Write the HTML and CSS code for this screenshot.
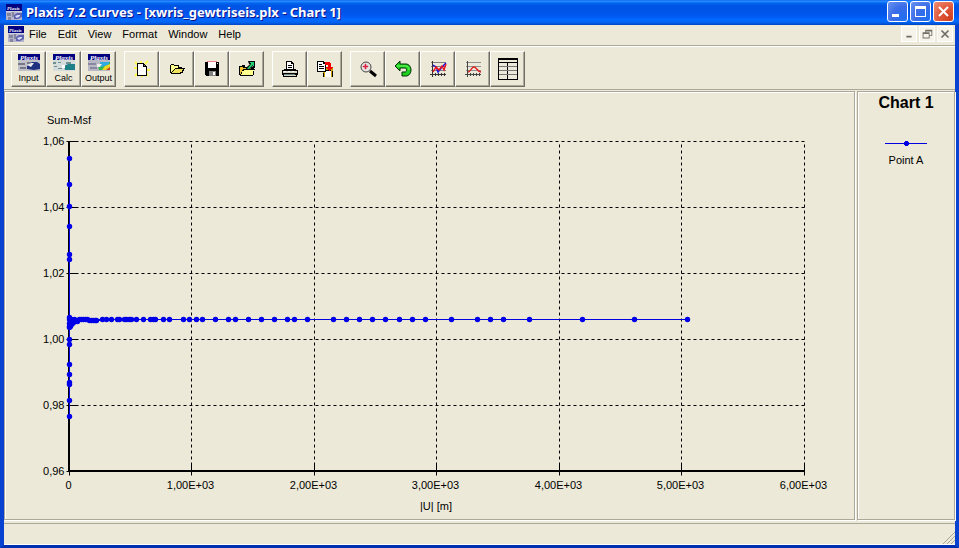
FILE: index.html
```html
<!DOCTYPE html>
<html lang="en">

<head>
  <meta charset="UTF-8">
  <meta name="viewport" content="width=device-width, initial-scale=1.0">
  <title>Plaxis 7.2 Curves</title>
  <link rel="stylesheet" href="styles.css">
</head>

<body>
  <svg class="defs" width="0" height="0" aria-hidden="true">
    <symbol id="appIcon" viewBox="0 0 16 16" overflow="visible">
      <rect width="16" height="16" fill="#b4b4cc" />
      <rect width="16" height="7" fill="#000080" />
      <text x="1" y="6" class="logo-text" font-size="5">Plaxis</text>
      <path d="M0 7h16v1H0z" fill="#d0d0e0" />
      <path d="M1 9h4v3H1zM6 8h2v5H6zM2 13h3v3H2z" fill="#85859f" />
      <path d="M8 11l3-2h5v4l-4 2H8z" fill="#6064b0" />
      <path d="M9 12l3-1h2v1l-3 2z" fill="#dcdcff" />
    </symbol>
  </svg>

  <div class="window">
    <header class="title-bar">
      <svg class="app-icon"><use href="#appIcon" /></svg>
      <h1>Plaxis 7.2 Curves - [xwris_gewtriseis.plx - Chart 1]</h1>
      <div class="window-buttons">
        <button aria-label="Minimize"><svg viewBox="0 0 19 19"><path d="M4 12h7v3H4z" fill="#fff" /></svg></button>
        <button aria-label="Maximize"><svg viewBox="0 0 19 19"><path d="M4 4h11v11H4zM5 7v7h9V7z" fill="#fff" fill-rule="evenodd" /></svg></button>
        <button class="close" aria-label="Close"><svg viewBox="0 0 19 19"><path d="M5 5l9 9M14 5l-9 9" stroke="#fff" stroke-width="2" /></svg></button>
      </div>
    </header>

    <nav class="menu-bar">
      <svg class="app-icon"><use href="#appIcon" /></svg>
      <button>File</button>
      <button>Edit</button>
      <button>View</button>
      <button>Format</button>
      <button>Window</button>
      <button>Help</button>
      <div class="mdi-buttons">
        <button aria-label="Minimize chart"><svg viewBox="0 0 16 16"><path d="M5 10h6v2H5z" /></svg></button>
        <button aria-label="Restore chart"><svg viewBox="0 0 16 16"><path d="M6 3h8v7h-3V9h2V5H7v1H6zM3 6h8v7H3zM4 8v4h6V8z" fill-rule="evenodd" /></svg></button>
        <button aria-label="Close chart"><svg viewBox="0 0 16 16"><path d="M4 4l8 8M12 4l-8 8" stroke="#716f64" stroke-width="2" /></svg></button>
      </div>
    </nav>

    <div class="toolbar">
      <div class="tool-group">
        <button class="labelled">
          <svg viewBox="0 0 22 17">
            <rect width="22" height="17" fill="#c0c0c8" />
            <rect width="22" height="6" fill="#000080" />
            <text x="2" y="6" class="logo-text" font-size="7">Plaxis</text>
            <path d="M0 9h7v2H0zM2 13h6v2H2zM9 8h4v2H9z" fill="#77778c" />
            <path d="M9 12l5-4h5l3 2v5l-6 1-7-1z" fill="#203080" />
            <path d="M9 11l4-2h3l-3 4z" fill="#e8e8e8" />
          </svg>
          <span>Input</span>
        </button>
        <button class="labelled">
          <svg viewBox="0 0 22 17">
            <rect width="22" height="17" fill="#d4dcdc" />
            <rect width="22" height="6" fill="#000080" />
            <text x="2" y="6" class="logo-text" font-size="7">Plaxis</text>
            <path d="M0 8h3v2H0zM5 8h3v1H5zM1 12h3v1H1zM5 14h4v1H5zM13 8h5v2h-5z" fill="#709090" />
            <path d="M11 12l4-2h7v6H12z" fill="#208088" />
            <path d="M9 11h3v3H9z" fill="#fff" />
          </svg>
          <span>Calc</span>
        </button>
        <button class="labelled">
          <svg viewBox="0 0 22 17">
            <rect width="22" height="17" fill="#b8b8c4" />
            <rect width="22" height="6" fill="#000080" />
            <text x="2" y="6" class="logo-text" font-size="7">Plaxis</text>
            <path d="M0 9h8v2H0zM2 13h7v2H2z" fill="#8888a0" />
            <path d="M10 12l4-4h8v8H11z" fill="#30b850" />
            <path d="M12 8h9v3l-8 2z" fill="#30a8e0" />
            <path d="M14 16l3-4 5-2v3l-4 3z" fill="#f0d820" />
            <path d="M18 16l4-3v3z" fill="#e03820" />
            <path d="M9 10h5l-2 3H9z" fill="#eee" />
          </svg>
          <span>Output</span>
        </button>
      </div>

      <div class="tool-group">
        <button aria-label="New">
          <svg viewBox="0 0 18 18">
            <path d="M2 2l3 3M8 1v3M15 1l-3 3M1 8h3M14 10h3M2 16l3-3M15 16l-2-3M9 15v2" stroke="#ffff50" stroke-width="2" />
            <path d="M4 3h7v1h1v1h1v1h1v10H4z" />
            <path d="M5 4h5v3h3v8H5zM11 5v1h1z" fill="#fff" />
          </svg>
        </button>
        <button aria-label="Open">
          <svg viewBox="0 0 18 18">
            <path d="M3 4h3v1h5v2h3v1h3v1h-1v2h-1v2h-2v1H3v-1H2V5h1z" />
            <path d="M3 5h3v1h4v2H7v1H6v1H5v1H4v1H3z" fill="#ffff90" />
            <path d="M7 9h8v1h-1v2h-2v1H4v-1h1v-1h1v-1h1z" fill="#f0e060" />
          </svg>
        </button>
        <button aria-label="Save">
          <svg viewBox="0 0 18 18">
            <path d="M2 2h14v14H3v-1H2z" />
            <path d="M4 1h10v1H4z" fill="#f08090" />
            <path d="M5 2h8v6H5z" fill="#fff" />
            <path d="M6 11h7v5H6z" fill="#808080" />
            <path d="M10 12h2v3h-2z" fill="#fff" />
            <path d="M14 3h1v1h-1z" fill="#ddd" />
          </svg>
        </button>
        <button aria-label="Export">
          <svg viewBox="0 0 18 18">
            <path d="M1 6h3V5h3v2h9v2h1v1h-1v5h-1v1H2v-1H1z" />
            <path d="M2 7h3v1h8v1H5v1H4v2H3v2H2z" fill="#f0c030" />
            <path d="M6 10h10v1h-1v4H3v-1h1v-3h2z" fill="#ffff90" />
            <path d="M10 1h7v7h-1V7h-1V6l-4 4H9l-1-1V8l4-4h-1z" />
            <path d="M12 2h4v4h-1V5l-4 4H9l4-5V3h-1z" fill="#20d070" />
          </svg>
        </button>
      </div>

      <div class="tool-group">
        <button aria-label="Print">
          <svg viewBox="0 0 18 18">
            <path d="M5 1h6v1h1v1h1v6h2v1h2v5h-1v2H2v-2H1v-5h2V9h2z" />
            <path d="M6 2h4v2h2v5H6z" fill="#fff" />
            <path d="M7 5h4v1H7zM7 7h4v1H7z" />
            <path d="M2 11h14v2H2zM3 15h12v1H3z" fill="#d8d8c8" />
            <path d="M3 11h2v1H3zM7 11h2v1H7zM11 11h2v1h-2z" fill="#fff" />
            <path d="M3 14h11v1H3z" fill="#608080" />
          </svg>
        </button>
        <button aria-label="Copy">
          <svg viewBox="0 0 18 18">
            <path d="M7 8h10v9H7z" fill="#c8a000" />
            <path d="M9 10h6v7H9z" fill="#fff" />
            <path d="M9 10h6v1H9zM16 11h1v6h-1zM7 13h1v4H7z" />
            <path d="M1 1h7v1h1v1h1v9H1z" />
            <path d="M2 2h5v2h2v7H2z" fill="#fff" />
            <path d="M3 4h3v1H3zM3 6h5v1H3zM3 8h5v1H3z" />
            <path d="M9 2h5v1h1v4h2v1h-1v1h-1v1h-1v1h-1v-1h-1V9h-1V8h-1V7h2V5H9z" fill="#f00000" />
          </svg>
        </button>
      </div>

      <div class="tool-group">
        <button aria-label="Zoom in">
          <svg viewBox="0 0 18 18">
            <circle cx="7" cy="7" r="5" fill="#e4e4e0" stroke="#444" />
            <path d="M11 11l6 5" stroke="#000" stroke-width="3" />
            <path d="M6 4h1v2h2v1H7v2H6V7H4V6h2z" fill="#e02040" stroke="#e02040" stroke-width=".5" />
          </svg>
        </button>
        <button aria-label="Undo">
          <svg viewBox="0 0 18 18">
            <path d="M1 6l5-5v3h6c3 0 5 3 5 6s-2 6-5 6H8v-4h3c2 0 2-4 0-4H6v3z" fill="#20d020" stroke="#003000" />
            <path d="M3 6h9c2 0 3 2 3 4" fill="none" stroke="#70ff60" />
          </svg>
        </button>
        <button aria-label="Curve settings">
          <svg viewBox="0 0 18 18">
            <g shape-rendering="crispEdges">
              <path d="M2 2h15v1H2zM2 6h15v1H2zM2 10h15v1H2z" fill="#808080" />
              <path d="M3 1h1v16H3zM1 14h16v1H1zM6 13h1v3H6zM9 13h1v3H9zM12 13h1v3h-1zM15 13h1v3h-1z" fill="#333" />
            </g>
            <path d="M4 5l3 2 2 5 4-5 4-4" fill="none" stroke="#1010e0" stroke-width="1.4" />
            <path d="M4 12l3-5 3 3 3-4 2 4 2-6" fill="none" stroke="#f01020" stroke-width="1.4" />
          </svg>
        </button>
        <button aria-label="Chart settings">
          <svg viewBox="0 0 18 18">
            <g shape-rendering="crispEdges">
              <path d="M2 2h15v1H2zM2 6h15v1H2zM2 10h15v1H2z" fill="#909090" />
              <path d="M3 1h1v16H3zM1 14h16v1H1zM6 13h1v3H6zM9 13h1v3H9zM12 13h1v3h-1zM15 13h1v3h-1z" fill="#444" />
            </g>
            <path d="M4 12c3 0 3-5 6-5s3 5 7 5" fill="none" stroke="#e02020" stroke-width="1.4" />
          </svg>
        </button>
        <button aria-label="Table">
          <svg class="table-icon" viewBox="0 0 20 22">
            <path d="M0 0h20v22H0z" />
            <path d="M1 2h18v2H1zM1 5h8v16H1zM10 5h9v16h-9z" fill="#ece9d8" />
            <path d="M1 8h18v1H1zM1 12h18v1H1zM1 16h18v1H1z" fill="#777" />
          </svg>
        </button>
      </div>
    </div>

    <main class="workspace">
      <section class="chart-panel">
        <svg id="chart" viewBox="0 0 849 427" role="img" aria-label="Sum-Msf against displacement">
          <text x="42" y="32">Sum-Msf</text>
          <g id="grid"></g>
          <g id="curve"></g>
          <text x="431" y="418" text-anchor="middle">|U| [m]</text>
        </svg>
      </section>
      <aside class="legend">
        <h2>Chart 1</h2>
        <svg class="legend-line" viewBox="0 0 42 5">
          <path d="M0 2h42v1H0z" />
          <path d="M20 0h3v1h1v3h-1v1h-3V4h-1V1h1z" />
        </svg>
        <p>Point A</p>
      </aside>
    </main>

    <footer class="status-bar">
      <svg viewBox="0 0 13 13">
        <path d="M1 13L13 1M5 13l8-8M9 13l4-4" stroke="#aca899" />
      </svg>
    </footer>
  </div>

  <script src="chart.js"></script>
</body>

</html>
```
FILE: styles.css
```css
* {
  box-sizing: border-box;
}

body {
  margin: 0;
  font-family: Tahoma, "Liberation Sans", Arial, sans-serif;
  font-size: 11px;
  color: #000;
  background-color: #ece9d8;
}

button {
  margin: 0;
  padding: 0;
  border: none;
  background: none;
  color: inherit;
  font: inherit;
}

svg {
  display: block;
}

.defs {
  position: absolute;
}

.window {
  display: flex;
  flex-direction: column;
  height: 100vh;
  border: solid #0842d0;
  border-width: 0 4px 3px;
  border-color: #0842d0 #0842d0 #0030b0;
}

.app-icon {
  width: 16px;
  height: 16px;
  flex: none;
  overflow: visible;
}

.logo-text {
  font-family: "Liberation Serif", serif;
  font-style: italic;
  font-weight: bold;
  fill: #fff;
}

/* title bar */
.title-bar {
  display: flex;
  align-items: center;
  gap: 4px;
  flex: none;
  height: 25px;
  margin: 0 -4px;
  padding: 0 5px 2px 6px;
  background: linear-gradient(#0058ee 0%, #3593ff 4%, #127dff 8%, #0262ee 14%, #0054e3 24%, #0055eb 56%, #005bf5 66%, #026afe 80%, #0062ef 90%, #0046c0 100%);
}

.title-bar h1 {
  flex: 1;
  margin: 0;
  color: #fff;
  font-family: "Trebuchet MS", "Noto Sans", sans-serif;
  font-size: 13px;
  line-height: 20px;
  text-shadow: 1px 1px #0f1089;
  white-space: nowrap;
}

.window-buttons {
  display: flex;
  gap: 2px;
}

.window-buttons button {
  width: 21px;
  height: 21px;
  border: 1px solid #fff;
  border-radius: 3px;
  background: radial-gradient(circle at 85% 85%, #2070f0, #3a6ce8 50%, #6c94f0 100%);
}

.window-buttons .close {
  background: radial-gradient(circle at 85% 85%, #d04020, #e05a3c 50%, #f09078 100%);
}

/* menu */
.menu-bar {
  display: flex;
  align-items: center;
  flex: none;
  height: 21px;
  padding: 0 2px 2px 4px;
  border-bottom: 1px solid #aca899;
}

.menu-bar > button {
  margin-right: 11px;
}

.menu-bar .app-icon {
  margin-right: 5px;
}

.mdi-buttons {
  display: flex;
  gap: 2px;
  margin-left: auto;
}

.mdi-buttons button {
  width: 16px;
  height: 16px;
  border: 1px solid #fff;
  background-color: #f5f3ea;
}

.mdi-buttons svg {
  fill: #716f64;
}

/* toolbar */
.toolbar {
  display: flex;
  gap: 8px;
  flex: none;
  height: 44px;
  padding: 4px 7px;
  border-top: 1px solid #fff;
  border-bottom: 1px solid #aca899;
}

.tool-group {
  display: flex;
}

.tool-group button {
  display: flex;
  flex-direction: column;
  align-items: center;
  justify-content: center;
  width: 35px;
  height: 36px;
  border: 1px solid;
  border-color: #fff #716f64 #716f64 #fff;
  box-shadow: inset -1px -1px #aca899;
}

.tool-group svg {
  width: 18px;
  height: 18px;
}

.tool-group .table-icon {
  width: 20px;
  height: 22px;
}

.tool-group .labelled svg {
  width: 22px;
  height: 17px;
}

.labelled span {
  margin-top: 1px;
  font-size: 9px;
  line-height: 12px;
}

/* chart and legend */
.workspace {
  display: flex;
  flex: 1;
  gap: 2px;
  min-height: 0;
  margin-top: 1px;
}

.chart-panel,
.legend {
  border: 1px solid #aca899;
  box-shadow: 1px 1px #fff, inset 1px 1px #fff;
}

.chart-panel {
  flex: 1;
  min-width: 0;
}

#chart {
  width: 100%;
  height: 100%;
  font-family: "Liberation Sans", Arial, sans-serif;
  font-size: 11px;
}

.grid-line {
  stroke: #000;
  stroke-dasharray: 3 3;
}

.tick {
  stroke: #000;
}

.axis {
  stroke: #000;
  stroke-width: 2;
}

.curve-line {
  fill: none;
  stroke: #0000e0;
  shape-rendering: crispEdges;
}

.curve-point {
  fill: #0000e8;
}

.legend {
  display: flex;
  flex-direction: column;
  align-items: center;
  flex: none;
  width: 98px;
}

.legend h2 {
  margin: 0;
  padding-top: 1px;
  font-family: "Liberation Sans", Arial, sans-serif;
  font-size: 16px;
  line-height: 20px;
}

.legend-line {
  width: 42px;
  height: 5px;
  margin: 28px 0 7px;
  fill: #0000e0;
}

.legend p {
  margin: 0;
  line-height: 14px;
}

/* status bar */
.status-bar {
  display: flex;
  align-items: flex-end;
  justify-content: flex-end;
  flex: none;
  height: 22px;
  margin-top: 3px;
  border-top: 1px solid #aca899;
  border-bottom: 1px solid #fff;
}

.status-bar svg {
  width: 13px;
  height: 13px;
}
```
FILE: chart.js
```js
const SVG_NS = 'http://www.w3.org/2000/svg';
const plot = { left: 64, right: 799, top: 49, bottom: 379 };
const xMax = 6000;
const yMin = 0.96;
const yMax = 1.06;

// [displacement, Sum-Msf]
const points = [
  [0, 1], [0, 1.0242], [0, 1.0403], [0, 1.0548], [0, 1.047], [0, 1.0342],
  [0, 1.0258], [0, 0.9985], [0, 0.9924], [0, 0.9894], [0, 0.987], [0, 0.9865],
  [0, 0.9815], [0, 0.9767], [0, 1.0068], [0, 1.006], [0, 1.005], [0, 1.004],
  [5, 1.0036], [10, 1.004], [16, 1.006], [16, 1.005], [18, 1.0045], [24, 1.006],
  [26, 1.005], [34, 1.0052], [42, 1.006], [50, 1.0054], [60, 1.0058], [70, 1.0056]
];
[86, 102, 118, 134, 150].forEach(x => points.push([x, 1.006]));
[166, 182, 198, 214, 228].forEach(x => points.push([x, 1.0057]));
[275, 308, 343, 397, 416, 449, 471, 490, 514, 553, 607, 667, 688, 710, 770,
  819, 933, 985, 1039, 1088, 1194, 1300, 1358, 1464, 1570, 1676, 1782, 1839,
  1945, 2158, 2264, 2370, 2476, 2582, 2696, 2802, 2908, 3121, 3333, 3439, 3545,
  3757, 4190, 4615, 5048].forEach(x => points.push([x, 1.006]));

// half pixel keeps the one pixel lines sharp
function toX(value) {
  return Math.floor(plot.left + value / xMax * (plot.right - plot.left)) + 0.5;
}

function toY(value) {
  return Math.round(plot.top + (yMax - value) / (yMax - yMin) * (plot.bottom - plot.top)) + 0.5;
}

function add(parent, name, attrs, text) {
  const el = document.createElementNS(SVG_NS, name);
  for (const key in attrs) {
    el.setAttribute(key, attrs[key]);
  }
  if (text) {
    el.textContent = text;
  }
  parent.appendChild(el);
}

function line(parent, cls, x1, y1, x2, y2) {
  add(parent, 'line', { class: cls, x1: x1, y1: y1, x2: x2, y2: y2 });
}

function drawGrid() {
  const grid = document.getElementById('grid');
  const left = toX(0);
  const right = toX(xMax);
  const top = toY(yMax);
  const bottom = toY(yMin);

  for (let i = 0; i <= 5; i++) {
    const value = yMin + i * 0.02;
    const y = toY(value);
    if (i > 0) {
      line(grid, 'grid-line', left, y, right, y);
    }
    line(grid, 'tick', left - 3, y, left + 8, y);
    add(grid, 'text', { x: left - 5, y: y + 3, 'text-anchor': 'end' }, value.toFixed(2).replace('.', ','));
  }

  for (let i = 0; i <= 6; i++) {
    const x = toX(i * 1000);
    if (i > 0) {
      line(grid, 'grid-line', x, bottom, x, top);
    }
    line(grid, 'tick', x, bottom - (i > 0 ? 8 : 0), x, bottom + 4);
    add(grid, 'text', { x: x - 1, y: bottom + 17, 'text-anchor': 'middle' }, i === 0 ? '0' : i + ',00E+03');
  }

  line(grid, 'axis', left - 0.5, top, left - 0.5, bottom + 0.5);
  line(grid, 'axis', left - 1, bottom - 0.5, right, bottom - 0.5);
}

function drawCurve() {
  const curve = document.getElementById('curve');
  const path = points.map(p => toX(p[0]) + ',' + toY(p[1])).join(' ');
  add(curve, 'polyline', { class: 'curve-line', points: path });
  points.forEach(p => {
    add(curve, 'circle', { class: 'curve-point', cx: toX(p[0]), cy: toY(p[1]), r: 2.7 });
  });
}

drawGrid();
drawCurve();
```
